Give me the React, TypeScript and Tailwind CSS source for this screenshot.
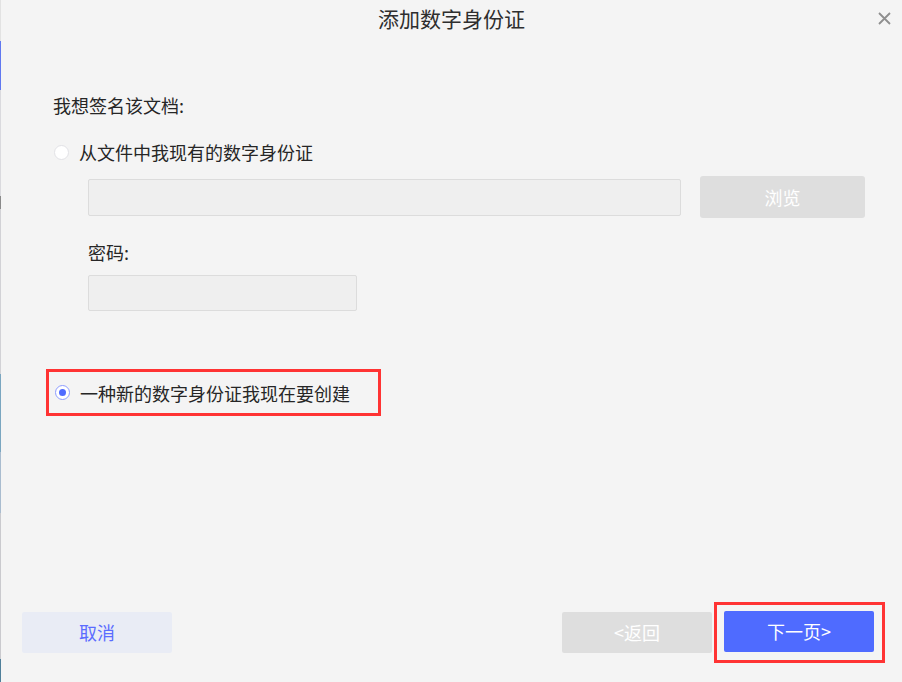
import React from 'react';

const font = { fontFamily: '"Noto Sans CJK SC", "Noto Sans", sans-serif' };

function Radio({ checked }: { checked?: boolean }) {
  if (checked) {
    return (
      <span className="w-[15px] h-[15px] rounded-full border border-[#8d9cff] bg-white flex items-center justify-center shrink-0">
        <span className="w-[7px] h-[7px] rounded-full bg-[#4f6bff]" />
      </span>
    );
  }
  return <span className="block w-[15px] h-[15px] rounded-full border border-[#e2e2e6] bg-white shrink-0" />;
}

export default function App() {
  const [choice, setChoice] = React.useState<'file' | 'new'>('new');

  return (
    <div className="w-[902px] h-[682px] bg-[#f4f4f4] flex text-[#262626]" style={font}>
      {/* window edge behind the dialog */}
      <div className="w-px flex flex-col shrink-0">
        <div className="h-[41px] bg-[#e2e2e2]" />
        <div className="h-[49px] bg-[#6078f0]" />
        <div className="h-[106px] bg-[#dadade]" />
        <div className="h-[13px] bg-[#8a8a8a]" />
        <div className="h-[165px] bg-[#d2d2d6]" />
        <div className="h-[78px] bg-[#7aa6c0]" />
        <div className="h-[61px] bg-[#a9bccf]" />
        <div className="h-[146px] bg-[#cacace]" />
        <div className="flex-1 bg-[#4f7f9a]" />
      </div>

      <div className="flex-1 flex flex-col">
        {/* Header */}
        <div className="h-[36px] grid grid-cols-[1fr_auto_1fr] items-center">
          <div />
          <h1 className="text-[21px] leading-[26px] text-[#2e2e2e]">添加数字身份证</h1>
          <div className="flex justify-end pr-[11px]">
            <svg width="13" height="13" viewBox="0 0 13 13" className="text-[#8f8f8f]">
              <path d="M1 1 L12 12 M12 1 L1 12" stroke="currentColor" strokeWidth="1.8" />
            </svg>
          </div>
        </div>

        {/* Body */}
        <div className="pl-[52px] pt-[57px] text-[18px] leading-[24px]">
          <p>我想签名该文档:</p>

          <label className="mt-[23px] flex items-center gap-[10px] cursor-pointer" onClick={() => setChoice('file')}>
            <span className="ml-px"><Radio checked={choice === 'file'} /></span>
            <span>从文件中我现有的数字身份证</span>
          </label>

          <div className="mt-[12px] pl-[35px] flex items-center gap-[19px]">
            <div className="w-[593px] h-[37px] bg-[#efefef] border border-[#dcdcdc] rounded-[2px]" />
            <button className="w-[165px] h-[42px] bg-[#dedede] rounded-[3px] text-white text-[18px]">浏览</button>
          </div>

          <p className="mt-[22px] pl-[35px]">密码:</p>
          <div className="mt-[11px] ml-[35px] w-[269px] h-[36px] bg-[#efefef] border border-[#dcdcdc] rounded-[2px]" />

          <div className="mt-[58px] -ml-[7px] w-[335px] h-[47px] border-[3px] border-[#ff3333] flex items-center pl-[5px]">
            <label className="flex items-center gap-[10px] cursor-pointer" onClick={() => setChoice('new')}>
              <span className="ml-px"><Radio checked={choice === 'new'} /></span>
              <span>一种新的数字身份证我现在要创建</span>
            </label>
          </div>
        </div>

        {/* Footer */}
        <div className="mt-auto pb-[19px] pl-[21px] pr-[17px] flex items-center">
          <button className="w-[150px] h-[41px] bg-[#e9ecf5] rounded-[2px] text-[#5b6cff] text-[18px]">取消</button>
          <div className="flex-1" />
          <button className="w-[150px] h-[41px] bg-[#dedede] rounded-[2px] text-white text-[18px]">&lt;返回</button>
          <div className="ml-[2px] border-[3px] border-[#ff3333] pt-[6px] pb-[8px] pl-[7px] pr-[8px]">
            <button className="w-[150px] h-[41px] bg-[#4f6bff] rounded-[2px] text-white text-[18px]">下一页&gt;</button>
          </div>
        </div>
      </div>
    </div>
  );
}
